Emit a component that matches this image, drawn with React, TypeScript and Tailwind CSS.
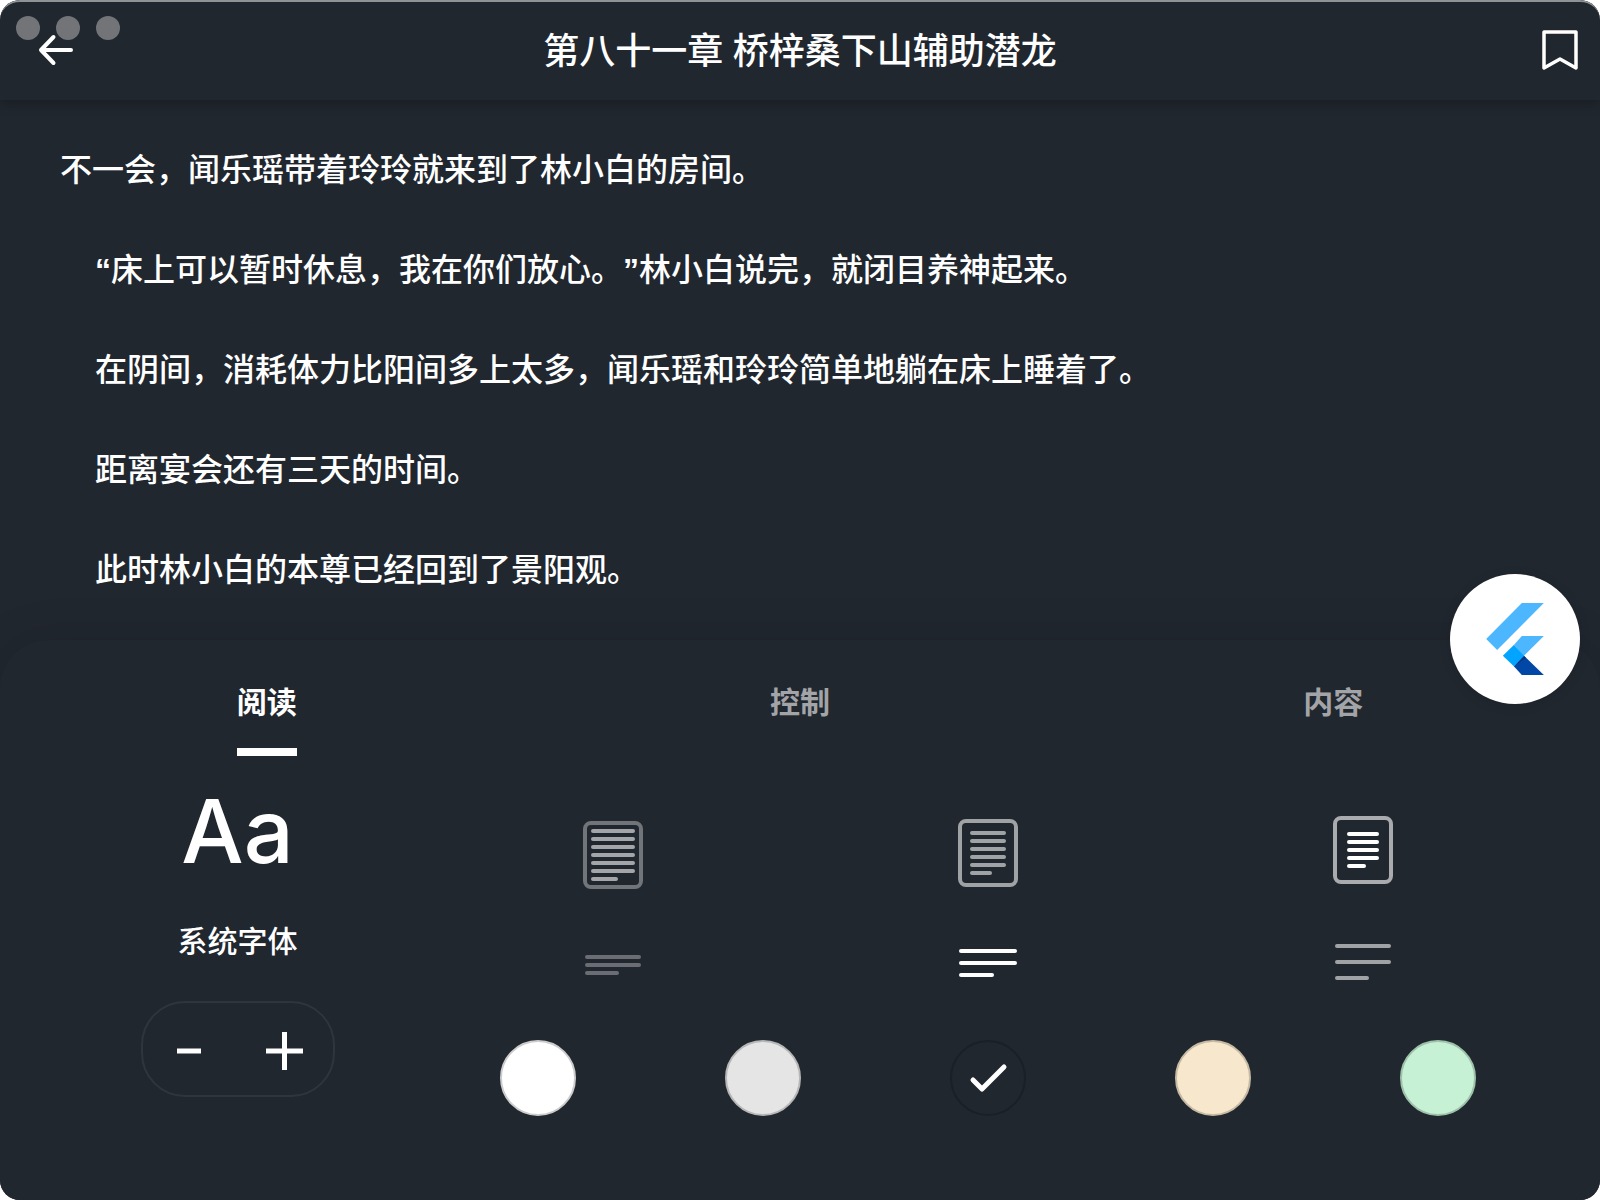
import { useState } from "react";

const paragraphs = [
  "“床上可以暂时休息，我在你们放心。”林小白说完，就闭目养神起来。",
  "在阴间，消耗体力比阳间多上太多，闻乐瑶和玲玲简单地躺在床上睡着了。",
  "距离宴会还有三天的时间。",
  "此时林小白的本尊已经回到了景阳观。",
];

const tabs = ["阅读", "控制", "内容"];

type Margin = {
  label: string;
  top: number;
  frame: string;
  ink: string;
  inset: number;
  first: number;
  rows: number;
  last: number;
};

const margins: Margin[] = [
  { label: "窄边距", top: 7, frame: "#717579", ink: "#a3a5a9", inset: 10, first: 15, rows: 7, last: 27 },
  { label: "中边距", top: 5, frame: "#a0a3a6", ink: "#a0a3a6", inset: 14, first: 17, rows: 6, last: 22 },
  { label: "宽边距", top: 2, frame: "#a9abaf", ink: "#ffffff", inset: 16, first: 18, rows: 5, last: 19 },
];

const spacings = [
  { label: "紧凑行距", ink: "#6a6d74", ys: [13, 21, 29], width: 56, last: 34 },
  { label: "标准行距", ink: "#ffffff", ys: [7, 19, 31], width: 58, last: 35 },
  { label: "宽松行距", ink: "#a0a3a6", ys: [2, 18, 34], width: 56, last: 34 },
];

const swatches = [
  { label: "白色", style: "bg-white border-[#cccccc]" },
  { label: "灰色", style: "bg-[#e5e5e5] border-[#b7b7b8]" },
  { label: "深色", style: "bg-[#21272f] border-[#1a2027]" },
  { label: "米色", style: "bg-[#f7e8cd] border-[#c6baa4]" },
  { label: "绿色", style: "bg-[#c6f1d5] border-[#9ec1aa]" },
];

// Curly quotes are set in a proportional Latin face, the rest in the reading font.
function Prose({ text }: { text: string }) {
  return text.split(/([“”])/).map((part, i) =>
    part === "“" || part === "”" ? (
      <span key={i} className="font-['Liberation_Sans',sans-serif] font-bold">
        {part}
      </span>
    ) : (
      part
    ),
  );
}

function MarginIcon({ m }: { m: Margin }) {
  const width = 64 - m.inset * 2;
  return (
    <svg width="64" height="80" viewBox="0 0 64 80" aria-hidden="true">
      <rect x="4" y={m.top + 2} width="56" height="64" rx="6" fill="none" stroke={m.frame} strokeWidth="4" />
      {Array.from({ length: m.rows }, (_, i) => (
        <rect
          key={i}
          x={m.inset}
          y={m.first + i * 8}
          width={i === m.rows - 1 ? m.last : width}
          height="4"
          rx="2"
          fill={m.ink}
        />
      ))}
    </svg>
  );
}

function FlutterLogo() {
  return (
    <svg width="58" height="72" viewBox="0 0 173 216" aria-hidden="true">
      <path d="M107 0H173L33 141L0 108Z" fill="#4cb7ff" />
      <path d="M107 99H173L113 159L83 126Z" fill="#4cb7ff" />
      <path d="M83 190L113 158L173 216H107Z" fill="#0147a6" />
      <path d="M83 190L113 158L119 164Z" fill="#01307a" />
      <path d="M83 126L114 158L83 190L50 158Z" fill="#01a4ff" />
    </svg>
  );
}

export default function App() {
  const [tab, setTab] = useState(0);
  const [color, setColor] = useState(2);

  return (
    <div
      className="min-h-screen bg-white font-[Inter,'Noto_Sans_CJK_SC',sans-serif] font-medium text-white [text-spacing-trim:space-all]"
      lang="zh-CN"
    >
      <div className="relative flex min-h-screen flex-col overflow-hidden rounded-[20px] bg-[#21272f]">
        <header className="relative z-10 flex h-[100px] items-center justify-between rounded-t-[20px] border-t-2 border-[#909396] bg-[#21272f] px-5 shadow-[0_4px_12px_rgba(0,0,0,0.25)]">
          <div className="absolute top-3.5 left-4 flex gap-4" aria-hidden="true">
            <span className="size-6 rounded-full bg-[#727478]" />
            <span className="size-6 rounded-full bg-[#727478]" />
            <span className="size-6 rounded-full bg-[#727478]" />
          </div>
          <button type="button" aria-label="返回" className="relative flex w-[72px] pl-4">
            <svg width="40" height="40" viewBox="0 0 40 40" fill="none" stroke="white" strokeWidth="4" strokeLinecap="round" strokeLinejoin="round" aria-hidden="true">
              <path d="M17.5 6L5 19L17.5 32M5 19H35" />
            </svg>
          </button>
          <h1 className="text-[36px] leading-[48px] font-medium">第八十一章 桥梓桑下山辅助潜龙</h1>
          <button type="button" aria-label="添加书签" className="flex w-[72px] justify-end">
            <svg width="40" height="40" viewBox="0 0 40 40" fill="none" stroke="white" strokeWidth="3.5" strokeLinejoin="round" className="overflow-visible" aria-hidden="true">
              <path d="M4 1H36V37L20 28L4 37Z" />
            </svg>
          </button>
        </header>

        <main className="flex flex-1 flex-col gap-[50px] px-[60px] pt-[45px] text-[32px] leading-[50px]">
          <p>不一会，闻乐瑶带着玲玲就来到了林小白的房间。</p>
          {paragraphs.map((text) => (
            <p key={text} className="pl-[35px]">
              <Prose text={text} />
            </p>
          ))}
        </main>

        <section className="relative rounded-t-[48px] bg-[#21272f] pb-[84px] shadow-[0_0_48px_rgba(0,0,0,0.12)]">
          <button
            type="button"
            aria-label="Flutter"
            className="absolute -top-[66px] right-5 flex size-[130px] items-center justify-center rounded-full bg-white shadow-[0_2px_12px_rgba(0,0,0,0.12)]"
          >
            <FlutterLogo />
          </button>

          <div role="tablist" className="grid grid-cols-3 pt-10">
            {tabs.map((name, i) => (
              <button
                key={name}
                type="button"
                role="tab"
                aria-selected={i === tab}
                onClick={() => setTab(i)}
                className={
                  "justify-self-center border-b-8 pb-6 text-[30px] leading-[44px] font-semibold " +
                  (i === tab ? "border-white text-white" : "border-transparent text-[#a2a4a7]")
                }
              >
                {name}
              </button>
            ))}
          </div>

          <div className="flex px-[50px]">
            <div className="flex flex-1 flex-col items-center">
              <p className="pt-5 text-[88px] leading-[110px] font-medium" aria-hidden="true">
                Aa
              </p>
              <button type="button" className="mt-[33px] text-[30px] leading-[44px]">
                系统字体
              </button>
              <div className="mt-[38px] flex h-24 w-[194px] rounded-[44px] border-2 border-[#2f353d]">
                <button type="button" aria-label="减小字号" className="flex flex-1 items-center justify-center">
                  <svg width="40" height="40" viewBox="0 0 40 40" aria-hidden="true">
                    <path d="M7 22H31" stroke="white" strokeWidth="5" />
                  </svg>
                </button>
                <button type="button" aria-label="增大字号" className="flex flex-1 items-center justify-center">
                  <svg width="40" height="40" viewBox="0 0 40 40" className="overflow-visible" aria-hidden="true">
                    <path d="M1 22H38M19.5 3V41" stroke="white" strokeWidth="5" />
                  </svg>
                </button>
              </div>
            </div>

            <div className="flex flex-3 flex-col pt-[58px]">
              <div className="grid grid-cols-3 justify-items-center">
                {margins.map((m) => (
                  <button key={m.label} type="button" aria-label={m.label}>
                    <MarginIcon m={m} />
                  </button>
                ))}
              </div>
              <div className="mt-12 grid grid-cols-3 justify-items-center">
                {spacings.map((s) => (
                  <button key={s.label} type="button" aria-label={s.label}>
                    <svg width="64" height="40" viewBox="0 0 64 40" fill={s.ink} aria-hidden="true">
                      {s.ys.map((y, i) => (
                        <rect key={y} x={32 - s.width / 2} y={y} width={i === 2 ? s.last : s.width} height="4" rx="2" />
                      ))}
                    </svg>
                  </button>
                ))}
              </div>
              <div className="mt-[58px] grid grid-cols-5 justify-items-center" role="radiogroup" aria-label="背景颜色">
                {swatches.map((s, i) => (
                  <label key={s.label} className="relative flex size-[76px] items-center justify-center">
                    <input
                      type="radio"
                      name="background"
                      aria-label={s.label}
                      checked={color === i}
                      onChange={() => setColor(i)}
                      className={"size-[76px] appearance-none rounded-full border-2 " + s.style}
                    />
                    {color === i && (
                      <svg
                        width="40"
                        height="40"
                        viewBox="0 0 40 40"
                        fill="none"
                        stroke={i === 2 ? "white" : "#21272f"}
                        strokeWidth="5"
                        strokeLinecap="round"
                        strokeLinejoin="round"
                        className="pointer-events-none absolute"
                        aria-hidden="true"
                      >
                        <path d="M5 22L14 31L36 9" />
                      </svg>
                    )}
                  </label>
                ))}
              </div>
            </div>
          </div>
        </section>
      </div>
    </div>
  );
}
